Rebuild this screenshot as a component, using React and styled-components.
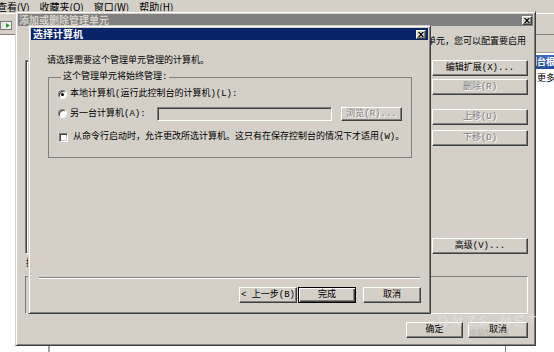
import React from "react";
import styled, { createGlobalStyle, css } from "styled-components";

const FACE = "#d4d0c8";
const FONT = `"Liberation Mono", "Noto Sans CJK SC", monospace`;
const UI_FONT = `"Noto Sans CJK SC", "Liberation Sans", sans-serif`;

const GlobalStyle = createGlobalStyle`
  * { box-sizing: border-box; }
  html, body { margin: 0; padding: 0; background: #fff; }
  body {
    font-family: ${FONT};
    font-size: 9px;
    line-height: 12px;
    color: #000;
  }
`;

const raised = css`
  background: ${FACE};
  border: 1px solid;
  border-color: #fff #404040 #404040 #fff;
  box-shadow: inset -1px -1px #808080;
`;

const sunken = css`
  border: 1px solid;
  border-color: #808080 #fff #fff #808080;
  box-shadow: inset 1px 1px #404040, inset -1px -1px ${FACE};
`;

const S = {
  Desktop: styled.div`
    position: relative;
    width: 554px;
    height: 352px;
    overflow: hidden;
    background: #fff;
  `,
  Mmc: styled.div`
    display: flex;
    flex-direction: column;
    height: 100%;
  `,
  MenuBar: styled.div`
    display: flex;
    align-items: center;
    height: 13px;
    margin-left: -8px;
    background: ${FACE};
    font-family: ${UI_FONT};
    font-size: 10px;
    line-height: 14px;
  `,
  MenuItem: styled.span`
    padding: 0 5px;
    white-space: nowrap;
  `,
  Toolbar: styled.div`
    display: flex;
    align-items: center;
    height: 22px;
    padding-top: 2px;
    background: ${FACE};
    border-top: 1px solid #fff;
    border-bottom: 1px solid #808080;
  `,
  MainArea: styled.div`
    flex: 1;
    display: flex;
  `,
  TreePane: styled.div`
    width: 50px;
    background: #fff;
    border-right: 2px solid #a0a0a0;
  `,
  ResultPane: styled.div`
    flex: 1;
    background: #fff;
    border-right: 1px solid #808080;
  `,
  ActionPane: styled.div`
    width: 48px;
    display: flex;
    flex-direction: column;
    background: #fff;
  `,
  ActionHeader: styled.div`
    height: 18px;
    background: ${FACE};
    border-bottom: 1px solid #a0a0a0;
  `,
  ActionBand: styled.div`
    height: 14px;
    margin-top: 2px;
    padding-left: 13px;
    background: linear-gradient(#3f6cc0, #26509e);
    color: #fff;
    font-family: ${UI_FONT};
    font-weight: bold;
    white-space: nowrap;
    line-height: 14px;
  `,
  ActionItem: styled.div`
    padding-left: 31px;
    margin-top: 4px;
    white-space: nowrap;
  `,
  Window: styled.div`
    position: absolute;
    left: ${(p) => p.$left}px;
    top: ${(p) => p.$top}px;
    width: ${(p) => p.$width}px;
    height: ${(p) => p.$height}px;
    display: flex;
    flex-direction: column;
    padding: 2px;
    background: ${FACE};
    border: 1px solid;
    border-color: ${FACE} #404040 #404040 ${FACE};
    box-shadow: inset 1px 1px #fff, inset -1px -1px #808080;
  `,
  TitleBar: styled.div`
    display: flex;
    align-items: center;
    justify-content: space-between;
    height: 12px;
    padding: 0 ${(p) => (p.$active ? 2 : 1)}px;
    background: ${(p) => (p.$active ? "#0a246a" : "#808080")};
    color: ${(p) => (p.$active ? "#fff" : FACE)};
    font-family: ${UI_FONT};
    font-size: 10px;
    font-weight: bold;
    line-height: 12px;
    white-space: nowrap;
  `,
  CloseBox: styled.span`
    ${raised};
    display: flex;
    align-items: center;
    justify-content: center;
    width: 10px;
    height: 9px;
  `,
  OuterBody: styled.div`
    flex: 1;
    display: flex;
    flex-direction: column;
    padding: 10px 5px 5px 7px;
  `,
  IntroLine: styled.div`
    display: flex;
    justify-content: flex-end;
    height: 12px;
    margin-right: 2px;
    overflow: hidden;
    white-space: nowrap;
  `,
  MainRow: styled.div`
    flex: 1;
    display: flex;
    gap: 6px;
  `,
  ListFrame: styled.div`
    flex: 1;
    margin-top: 12px;
    background: #fff;
    ${sunken};
  `,
  ButtonColumn: styled.div`
    width: 96px;
    display: flex;
    flex-direction: column;
    padding-top: 12px;
  `,
  Spacer: styled.div`
    flex: 1;
  `,
  SmallLabel: styled.div`
    height: 12px;
    margin-top: 4px;
    padding-left: 1px;
  `,
  DescBox: styled.div`
    height: 38px;
    margin-top: 6px;
    border: 1px solid;
    border-color: #808080 #fff #fff #808080;
  `,
  Footer: styled.div`
    display: flex;
    justify-content: flex-end;
    gap: 5px;
    margin-top: 8px;
  `,
  InnerBody: styled.div`
    flex: 1;
    display: flex;
    flex-direction: column;
    padding: 15px 16px 8px 16px;
  `,
  Prompt: styled.div`
    height: 12px;
    white-space: nowrap;
  `,
  Group: styled.fieldset`
    margin: 4px 0 0 1px;
    padding: 5px 8px 14px 9px;
    min-width: 0;
    border: 1px solid #808080;
  `,
  Legend: styled.legend`
    margin-left: 3px;
    padding: 0 2px;
    line-height: 12px;
  `,
  OptionRow: styled.div`
    display: flex;
    align-items: center;
    height: ${(p) => p.$h || 12}px;
    margin-top: ${(p) => p.$mt || 0}px;
    white-space: nowrap;
  `,
  Radio: styled.span`
    position: relative;
    flex: none;
    width: 9px;
    height: 9px;
    margin-right: 3px;
    border-radius: 50%;
    background: #fff;
    border: 1px solid;
    border-color: #808080 #fff #fff #808080;
    box-shadow: inset 1px 1px #404040;
    &::after {
      content: "";
      display: ${(p) => (p.$checked ? "block" : "none")};
      position: absolute;
      left: 2px;
      top: 2px;
      width: 3px;
      height: 3px;
      border-radius: 50%;
      background: #000;
    }
  `,
  Check: styled.span`
    flex: none;
    width: 9px;
    height: 9px;
    margin: 0 5px 0 1px;
    background: #fff;
    ${sunken};
  `,
  OptionText: styled.span`
    width: ${(p) => (p.$w ? `${p.$w}px` : "auto")};
  `,
  Field: styled.input`
    width: 175px;
    height: 14px;
    margin: 0 9px 0 0;
    padding: 0;
    background: ${FACE};
    ${sunken};
  `,
  Separator: styled.div`
    height: 2px;
    margin: 0 -8px;
    border-top: 1px solid #808080;
    border-bottom: 1px solid #fff;
  `,
  WizardButtons: styled.div`
    display: flex;
    justify-content: flex-end;
    margin: 8px -9px 0 0;
  `,
  Button: styled.button`
    ${raised};
    flex: none;
    width: ${(p) => p.$w || 58}px;
    height: ${(p) => p.$h || 16}px;
    margin-left: ${(p) => p.$ml || 0}px;
    margin-top: ${(p) => p.$mt || 0}px;
    padding: 0;
    font-family: ${FONT};
    font-size: 9px;
    line-height: 12px;
    white-space: nowrap;
    color: ${(p) => (p.disabled ? "#808080" : "#000")};
    text-shadow: ${(p) => (p.disabled ? "1px 1px #fff" : "none")};
    ${(p) =>
      p.$default &&
      css`
        border-color: #000;
        box-shadow: inset 1px 1px #fff, inset -1px -1px #404040,
          inset -2px -2px #808080;
      `}
  `,
  Watermark: styled.div`
    position: absolute;
    left: 436px;
    top: 314px;
    width: 106px;
    display: flex;
    flex-direction: column;
    align-items: center;
    pointer-events: none;
  `,
  MarkBig: styled.span`
    font-family: "Liberation Sans", sans-serif;
    font-size: 14px;
    line-height: 14px;
    letter-spacing: 4px;
    color: rgba(225, 225, 225, 0.8);
  `,
  MarkSmall: styled.span`
    font-family: ${UI_FONT};
    font-size: 8px;
    line-height: 10px;
    color: rgba(140, 140, 140, 0.45);
  `,
};

const CloseIcon = () => (
  <svg width="6" height="5" viewBox="0 0 6 5">
    <path d="M0 0h1.5L3 1.6 4.5 0H6L3.8 2.5 6 5H4.5L3 3.4 1.5 5H0l2.2-2.5z" fill="#000" />
  </svg>
);

const SnapinIcon = () => (
  <svg width="12" height="9" viewBox="0 0 12 9">
    <rect x="0.5" y="0.5" width="11" height="8" fill="#f4f4f4" stroke="#7a7a7a" />
    <rect x="1.5" y="1.5" width="3" height="6" fill="#dfe8df" />
    <path d="M6 2l4 2.5L6 7z" fill="#2f9a2f" />
  </svg>
);

const App = () => {
  return (
    <>
      <GlobalStyle />
      <S.Desktop>
        <S.Mmc>
          <S.MenuBar>
            <S.MenuItem>查看(V)</S.MenuItem>
            <S.MenuItem>收藏夹(O)</S.MenuItem>
            <S.MenuItem>窗口(W)</S.MenuItem>
            <S.MenuItem>帮助(H)</S.MenuItem>
          </S.MenuBar>
          <S.Toolbar>
            <SnapinIcon />
          </S.Toolbar>
          <S.MainArea>
            <S.TreePane />
            <S.ResultPane />
            <S.ActionPane>
              <S.ActionHeader />
              <S.ActionBand>控制台根节点</S.ActionBand>
              <S.ActionItem>更多操作</S.ActionItem>
            </S.ActionPane>
          </S.MainArea>
        </S.Mmc>

        <S.Window $left={15} $top={11} $width={521} $height={335}>
          <S.TitleBar>
            <span>添加或删除管理单元</span>
            <S.CloseBox>
              <CloseIcon />
            </S.CloseBox>
          </S.TitleBar>
          <S.OuterBody>
            <S.IntroLine>
              <span>对于可扩展的管理单元，您可以配置要启用</span>
            </S.IntroLine>
            <S.MainRow>
              <S.ListFrame />
              <S.ButtonColumn>
                <S.Button $w={96}>编辑扩展(X)...</S.Button>
                <S.Button $w={96} $mt={3} disabled>
                  删除(R)
                </S.Button>
                <S.Button $w={96} $mt={14} disabled>
                  上移(U)
                </S.Button>
                <S.Button $w={96} $mt={5} disabled>
                  下移(D)
                </S.Button>
                <S.Spacer />
                <S.Button $w={96}>高级(V)...</S.Button>
              </S.ButtonColumn>
            </S.MainRow>
            <S.SmallLabel>描述:</S.SmallLabel>
            <S.DescBox />
            <S.Footer>
              <S.Button $w={57}>确定</S.Button>
              <S.Button $w={60}>取消</S.Button>
            </S.Footer>
          </S.OuterBody>
        </S.Window>

        <S.Window $left={28} $top={25} $width={403} $height={289}>
          <S.TitleBar $active>
            <span>选择计算机</span>
            <S.CloseBox>
              <CloseIcon />
            </S.CloseBox>
          </S.TitleBar>
          <S.InnerBody>
            <S.Prompt>请选择需要这个管理单元管理的计算机。</S.Prompt>
            <S.Group>
              <S.Legend>这个管理单元将始终管理:</S.Legend>
              <S.OptionRow>
                <S.Radio $checked />
                <S.OptionText>本地计算机(运行此控制台的计算机)(L):</S.OptionText>
              </S.OptionRow>
              <S.OptionRow $h={15} $mt={6}>
                <S.Radio />
                <S.OptionText $w={87}>另一台计算机(A):</S.OptionText>
                <S.Field disabled />
                <S.Button $w={61} $h={14} disabled>
                  浏览(R)...
                </S.Button>
              </S.OptionRow>
              <S.OptionRow $mt={10}>
                <S.Check />
                <S.OptionText>
                  从命令行启动时，允许更改所选计算机。这只有在保存控制台的情况下才适用(W)。
                </S.OptionText>
              </S.OptionRow>
            </S.Group>
            <S.Spacer />
            <S.Separator />
            <S.WizardButtons>
              <S.Button>&lt; 上一步(B)</S.Button>
              <S.Button $default $ml={1}>
                完成
              </S.Button>
              <S.Button $ml={7}>取消</S.Button>
            </S.WizardButtons>
          </S.InnerBody>
        </S.Window>

        <S.Watermark>
          <S.MarkBig>DNZS.NET</S.MarkBig>
          <S.MarkSmall>电脑知识网</S.MarkSmall>
        </S.Watermark>
      </S.Desktop>
    </>
  );
};

export default App;
